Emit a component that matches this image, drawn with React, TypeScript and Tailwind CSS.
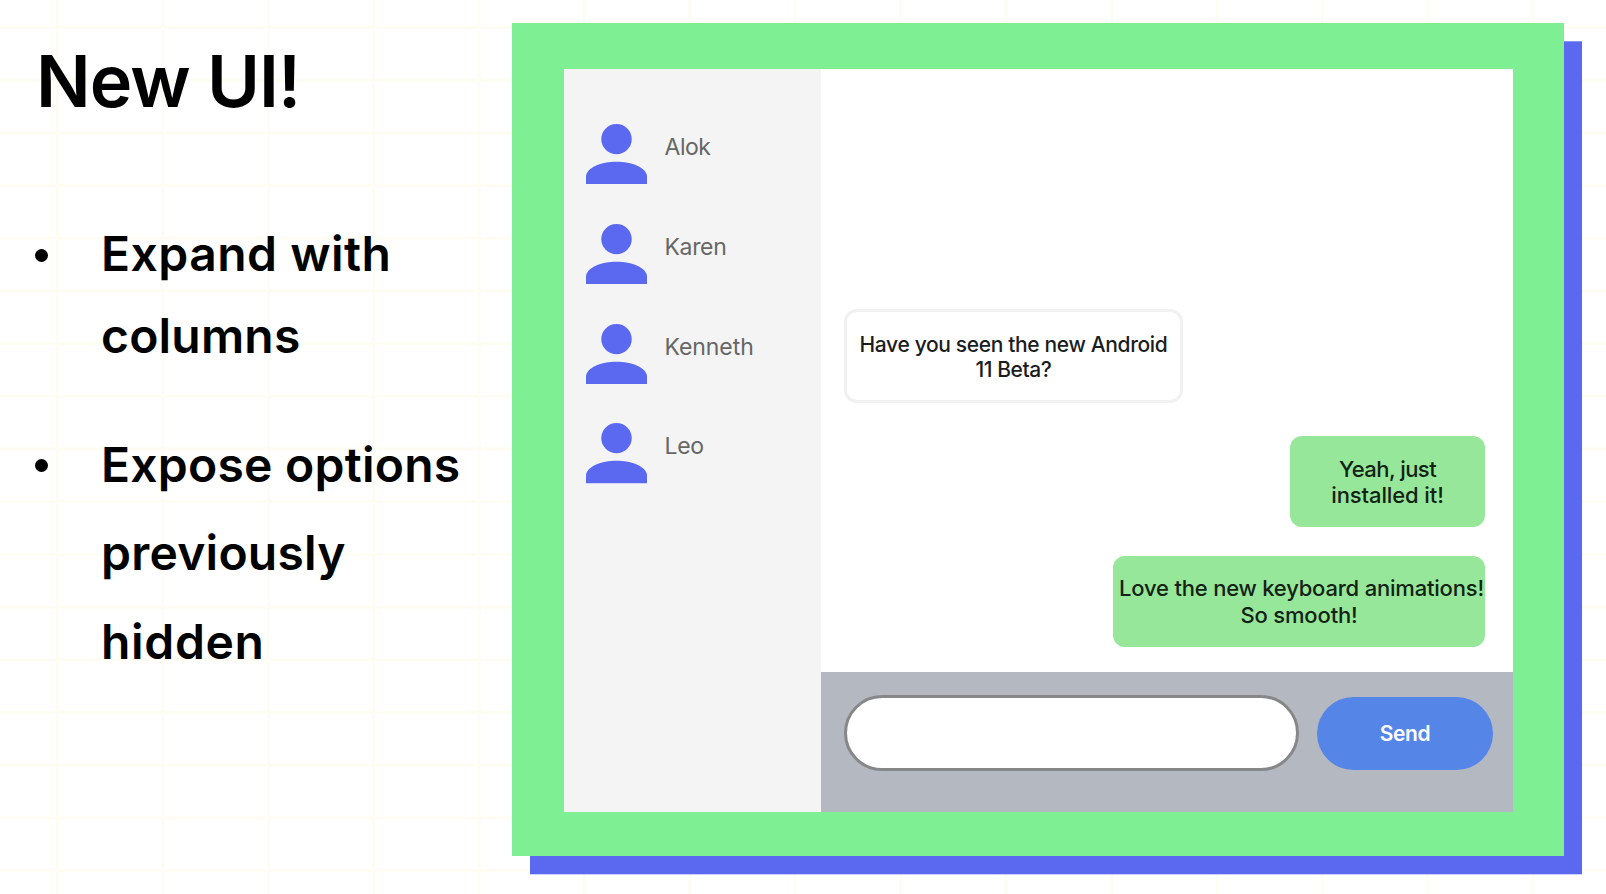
const contacts = [
  { name: "Alok", tracking: "tracking-[-0.02em]" },
  { name: "Karen", tracking: "tracking-[-0.015em]" },
  { name: "Kenneth", tracking: "tracking-[-0.003em]" },
  { name: "Leo", tracking: "tracking-[-0.015em]" },
];

function PersonIcon() {
  return (
    <svg
      className="h-[60.3px] w-[61px] shrink-0 fill-[#5b69f0]"
      viewBox="4 4 16 16"
      preserveAspectRatio="none"
      aria-hidden="true"
    >
      <circle cx="12" cy="8" r="4" />
      <path d="M12 14c-3.9 0-8 1.5-8 4v2h16v-2c0-2.5-4.1-4-8-4z" />
    </svg>
  );
}

function Bullet({ className }: { className: string }) {
  return <span className={`ml-[35px] h-[13px] w-[13px] shrink-0 rounded-full bg-black ${className}`} />;
}

function Notes() {
  return (
    <section className="w-[512px] shrink-0 pt-[45px] font-semibold text-black">
      <h1 className="pl-9 text-[72px] leading-[72px] tracking-[-0.013em]">New UI!</h1>
      <ul className="mt-[96px] flex flex-col gap-[43px] text-[48px] whitespace-nowrap">
        <li className="flex">
          <Bullet className="mt-[36px]" />
          <div className="ml-[53px] leading-[82.3px]">
            <p className="tracking-[0.01em]">Expand with</p>
            <p className="tracking-[0.004em]">columns</p>
          </div>
        </li>
        <li className="flex">
          <Bullet className="mt-[38px]" />
          <div className="ml-[53px] leading-[88.8px]">
            <p className="tracking-[0.005em]">Expose options</p>
            <p className="tracking-[0.005em]">previously</p>
            <p className="tracking-[0.014em]">hidden</p>
          </div>
        </li>
      </ul>
    </section>
  );
}

function Contacts() {
  return (
    <aside className="w-[257px] shrink-0 bg-[#f4f4f4] pt-[55.2px] pl-[21.7px]">
      <ul className="flex flex-col gap-[39.4px]">
        {contacts.map((c) => (
          <li key={c.name} className="flex gap-[17.8px]">
            <PersonIcon />
            <span className={`pt-[9px] text-[23px] leading-7 text-[#666666] ${c.tracking}`}>{c.name}</span>
          </li>
        ))}
      </ul>
    </aside>
  );
}

function Conversation() {
  return (
    <div className="flex grow flex-col bg-white text-center font-medium whitespace-nowrap text-[#1b1c1e]">
      <div className="flex grow flex-col pt-[240px] pr-[27.5px] pl-[23px]">
        <div className="h-[94px] w-[339px] rounded-[13px] border-[3px] border-[#f1f1f2] pt-[19.5px] text-[21px] leading-[25.5px]">
          <p className="tracking-[-0.017em]">Have you seen the new Android</p>
          <p className="tracking-[-0.02em]">11 Beta?</p>
        </div>
        <div className="mt-[33px] h-[91px] w-[195px] self-end rounded-[12px] bg-[#96e79a] pt-[19.5px] text-[22px] leading-[26.5px] text-[#142214]">
          <p className="tracking-[-0.025em]">Yeah, just</p>
          <p className="tracking-[-0.005em]">installed it!</p>
        </div>
        <div className="mt-[28.5px] h-[91.5px] w-[372px] self-end rounded-[12px] bg-[#96e79a] pt-[19.5px] text-[22px] leading-[26.5px] text-[#142214]">
          <p className="pl-[5px] tracking-[-0.009em]">Love the new keyboard animations!</p>
          <p className="tracking-[-0.007em]">So smooth!</p>
        </div>
      </div>
      <div className="flex h-[140px] shrink-0 items-start gap-[18px] bg-[#b4b8c1] pt-[23px] pl-[23px]">
        <div className="h-[76px] w-[455px] rounded-full border-[3px] border-[#878789] bg-white" />
        <button className="mt-[1.5px] h-[73.5px] w-[176px] rounded-full bg-[#5685e8] text-[21px] font-semibold tracking-[-0.02em] text-white">
          Send
        </button>
      </div>
    </div>
  );
}

export default function App() {
  return (
    <main className="flex h-[894px] w-[1606px] overflow-hidden bg-white bg-[linear-gradient(to_right,#fdfdf3_3px,transparent_3px),linear-gradient(to_bottom,#fdfdf3_3px,transparent_3px)] bg-[size:105.4px_52.7px] bg-[position:56px_26px] font-['Inter',sans-serif]">
      <Notes />
      <div className="mt-[23px] flex h-[833px] w-[1052px] shrink-0 bg-[#7fef94] pt-[46px] pr-[51.5px] pb-[44px] pl-[52px] shadow-[18px_18.3px_0_0_#5b69f0]">
        <Contacts />
        <Conversation />
      </div>
    </main>
  );
}
